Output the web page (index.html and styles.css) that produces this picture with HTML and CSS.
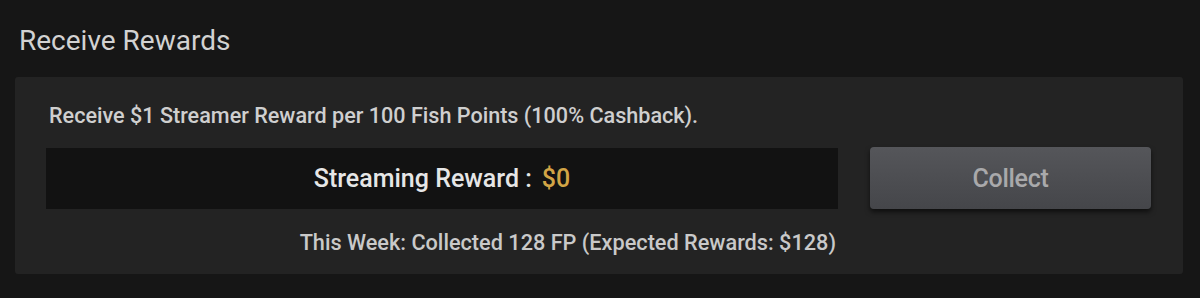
FILE: index.html
```html
<!DOCTYPE html>
<html lang="en">
<head>
  <meta charset="UTF-8" />
  <title>Receive Rewards</title>
  <link rel="stylesheet" href="styles.css">
</head>
<body>
  <div class="rewards">
    <h2 class="rewards-title">Receive Rewards</h2>
    <div class="rewards-panel">
      <p class="rewards-note">Receive $1 Streamer Reward per 100 Fish Points (100% Cashback).</p>
      <div class="reward-row">
        <div class="reward-main">
          <div class="reward-box">
            <span class="reward-label">Streaming Reward :</span>
            <span class="reward-value">$0</span>
          </div>
          <div class="reward-week">This Week: Collected 128 FP (Expected Rewards: $128)</div>
        </div>
        <button class="collect-button" disabled>Collect</button>
      </div>
    </div>
  </div>
</body>
</html>
```

FILE: styles.css
```css
body {
  margin: 0;
  background-color: #161616;
  font-family: Roboto, "Noto Sans", sans-serif;
  color: #d4d4d4;
}
.rewards {
  padding: 25px 17px 25px 15px;
}
.rewards-title {
  margin: 0 0 20px 4px;
  font-size: 28px;
  font-weight: 400;
  line-height: 32px;
  color: #d2d2d2;
}
.rewards-panel {
  background-color: #232323;
  border-radius: 3px;
  padding: 27px 32px 18px 31px;
}
.rewards-note {
  margin: 0 0 20px 3px;
  font-size: 21.6px;
  font-weight: 500;
  line-height: 24px;
  color: #cfcfcf;
}
.reward-row {
  display: flex;
  gap: 32px;
  align-items: flex-start;
}
.reward-main {
  flex: 1;
}
.reward-box {
  height: 61px;
  background-color: #121212;
  display: flex;
  justify-content: center;
  align-items: center;
  gap: 10px;
  font-size: 25px;
  font-weight: 500;
}
.reward-label {
  color: #e6e6e6;
}
.reward-value {
  color: #d2a546;
}
.reward-week {
  margin-top: 21px;
  padding-right: 2px;
  text-align: right;
  font-size: 21.7px;
  font-weight: 500;
  line-height: 26px;
  color: #c9c9c9;
}
.collect-button {
  width: 281px;
  height: 62px;
  margin-top: -1px;
  border: none;
  border-radius: 4px;
  background: linear-gradient(#55565a, #45464a);
  box-shadow: 0 3px 5px rgba(0, 0, 0, 0.6);
  font-family: Roboto, "Noto Sans", sans-serif;
  font-size: 25px;
  font-weight: 500;
  letter-spacing: -0.3px;
  color: #a9a9ab;
}
```
